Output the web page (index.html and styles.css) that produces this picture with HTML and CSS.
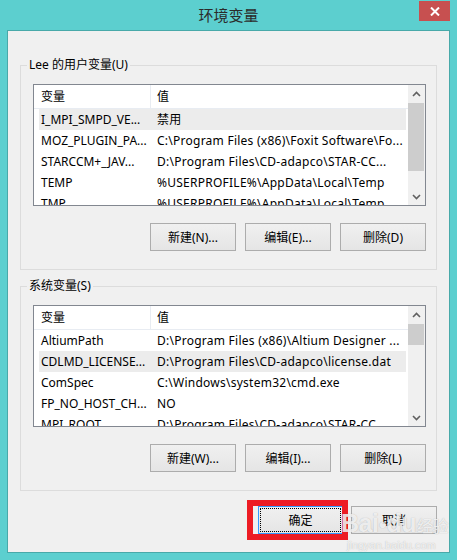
FILE: index.html
```html
<!DOCTYPE html>
<html lang="zh-CN">
<head>
  <meta charset="UTF-8" />
  <title>环境变量</title>
  <link rel="stylesheet" href="styles.css">
</head>
<body>
  <div class="window">
    <div class="titlebar">
      <span></span>
      <div class="title">环境变量</div>
      <button class="close" title="关闭">
        <svg width="10" height="9" viewBox="0 0 10 9"><path d="M1 0.5 L9 8.5 M9 0.5 L1 8.5" stroke="#fff" stroke-width="2"/></svg>
      </button>
    </div>

    <div class="client">
      <fieldset class="group">
        <legend>Lee 的用户变量(U)</legend>
        <div class="group-body">
          <div class="list">
            <div class="list-main">
              <div class="list-head">
                <div class="col1">变量</div>
                <div class="col2">值</div>
              </div>
              <div class="rows">
                <div class="row selected"><div class="col1">I_MPI_SMPD_VE...</div><div class="col2">禁用</div></div>
                <div class="row"><div class="col1">MOZ_PLUGIN_PA...</div><div class="col2">C:\Program Files (x86)\Foxit Software\Fo...</div></div>
                <div class="row"><div class="col1">STARCCM+_JAV...</div><div class="col2">D:\Program Files\CD-adapco\STAR-CC...</div></div>
                <div class="row"><div class="col1">TEMP</div><div class="col2">%USERPROFILE%\AppData\Local\Temp</div></div>
                <div class="row"><div class="col1">TMP</div><div class="col2">%USERPROFILE%\AppData\Local\Temp</div></div>
              </div>
            </div>
            <div class="scrollbar">
              <div class="sb-arrow"><svg width="9" height="6" viewBox="0 0 9 6"><path d="M1 5 L4.5 1.5 L8 5" fill="none" stroke="#606060" stroke-width="1.6"/></svg></div>
              <div class="sb-track"><div class="sb-thumb thumb-user"></div></div>
              <div class="sb-arrow"><svg width="9" height="6" viewBox="0 0 9 6"><path d="M1 1 L4.5 4.5 L8 1" fill="none" stroke="#606060" stroke-width="1.6"/></svg></div>
            </div>
          </div>
          <div class="btn-row">
            <button class="btn">新建(N)...</button>
            <button class="btn">编辑(E)...</button>
            <button class="btn">删除(D)</button>
          </div>
        </div>
      </fieldset>

      <fieldset class="group group-sys">
        <legend>系统变量(S)</legend>
        <div class="group-body">
          <div class="list">
            <div class="list-main">
              <div class="list-head">
                <div class="col1">变量</div>
                <div class="col2">值</div>
              </div>
              <div class="rows">
                <div class="row"><div class="col1">AltiumPath</div><div class="col2">D:\Program Files (x86)\Altium Designer ...</div></div>
                <div class="row selected"><div class="col1">CDLMD_LICENSE...</div><div class="col2">D:\Program Files\CD-adapco\license.dat</div></div>
                <div class="row"><div class="col1">ComSpec</div><div class="col2">C:\Windows\system32\cmd.exe</div></div>
                <div class="row"><div class="col1">FP_NO_HOST_CH...</div><div class="col2">NO</div></div>
                <div class="row"><div class="col1">MPI_ROOT</div><div class="col2">D:\Program Files\CD-adapco\STAR-CC...</div></div>
              </div>
            </div>
            <div class="scrollbar">
              <div class="sb-arrow"><svg width="9" height="6" viewBox="0 0 9 6"><path d="M1 5 L4.5 1.5 L8 5" fill="none" stroke="#606060" stroke-width="1.6"/></svg></div>
              <div class="sb-track"><div class="sb-thumb thumb-sys"></div></div>
              <div class="sb-arrow"><svg width="9" height="6" viewBox="0 0 9 6"><path d="M1 1 L4.5 4.5 L8 1" fill="none" stroke="#606060" stroke-width="1.6"/></svg></div>
            </div>
          </div>
          <div class="btn-row">
            <button class="btn">新建(W)...</button>
            <button class="btn">编辑(I)...</button>
            <button class="btn">删除(L)</button>
          </div>
        </div>
      </fieldset>

      <div class="dialog-buttons">
        <div class="ok-wrap">
          <button class="btn btn-ok">确定</button>
          <div class="mark"></div>
        </div>
        <button class="btn">取消</button>
      </div>

      <div class="watermark">
        <div class="wm-logo">Bai<span class="wm-paw">●</span>du<span class="wm-cn">经验</span></div>
        <div class="wm-url">jingyan.baidu.com</div>
      </div>
    </div>
  </div>
</body>
</html>
```

FILE: styles.css
```css
* {
  box-sizing: border-box;
}

body {
  margin: 0;
  font-family: "Noto Sans", "Noto Sans CJK SC", sans-serif;
  font-size: 12px;
  color: #000;
}

.window {
  width: 457px;
  height: 560px;
  background-color: #5ccfcf;
  padding: 0 7px 7px;
  display: flex;
  flex-direction: column;
}

.titlebar {
  height: 30px;
  flex: none;
  display: grid;
  grid-template-columns: 1fr auto 1fr;
}

.title {
  font-family: "Noto Sans CJK SC", sans-serif;
  font-size: 15px;
  line-height: 29px;
  color: #2b2b2b;
}

.close {
  justify-self: end;
  width: 31px;
  height: 20px;
  margin-top: 1px;
  padding: 0;
  border: none;
  background-color: #c75050;
  display: flex;
  align-items: center;
  justify-content: center;
}

.client {
  flex: 1;
  position: relative;
  background-color: #f0f0f0;
  border: 1px solid #48a9a9;
  padding: 26px 12px 0;
}

/* group boxes */
.group {
  margin: 0;
  padding: 0;
  min-width: 0;
  border: 1px solid #dcdcdc;
}

.group legend {
  margin-left: 6px;
  padding: 0 2px;
  line-height: 16px;
}

.group-sys {
  margin-top: 8px;
}

.group-body {
  padding: 11px 10px 18px 12px;
}

/* list view */
.list {
  height: 122px;
  border: 1px solid #828790;
  background-color: #fff;
  display: flex;
}

.list-main {
  flex: 1;
  min-width: 0;
  overflow: hidden;
}

.list-head {
  display: flex;
  height: 24px;
  line-height: 23px;
  border-bottom: 1px solid #e8ecf2;
}

.list-head .col1 {
  width: 117px;
  padding-left: 7px;
  border-right: 1px solid #e8ecf2;
}

.list-head .col2 {
  padding-left: 6px;
}

.rows {
  padding: 0 2px 0 5px;
}

.row {
  display: flex;
  height: 21px;
  line-height: 21px;
  white-space: nowrap;
}

.row.selected {
  background-color: #ececec;
}

.row .col1 {
  width: 116px;
  flex: none;
  padding-left: 2px;
  overflow: hidden;
}

.row .col2 {
  padding-left: 2px;
  overflow: hidden;
  letter-spacing: 0.25px;
}

.scrollbar {
  width: 17px;
  flex: none;
  background-color: #f0f0f0;
  display: flex;
  flex-direction: column;
}

.sb-arrow {
  height: 17px;
  display: flex;
  align-items: center;
  justify-content: center;
}

.sb-track {
  flex: 1;
  padding: 1px 1px 0 0;
}

.sb-thumb {
  background-color: #cdcdcd;
}

.thumb-user {
  height: 68px;
}

.thumb-sys {
  height: 21px;
}

/* buttons */
.btn-row {
  display: flex;
  justify-content: flex-end;
  gap: 9px;
  margin-top: 17px;
}

.btn {
  width: 86px;
  height: 28px;
  padding: 0;
  border: 1px solid #acacac;
  background: linear-gradient(#f0f0f0, #e5e5e5);
  font: inherit;
  color: #000;
}

.dialog-buttons {
  display: flex;
  justify-content: flex-end;
  gap: 8px;
  margin-top: 15px;
}

.ok-wrap {
  position: relative;
  display: flex;
}

.btn-ok {
  width: 85px;
  border-color: #3399ff;
  background: linear-gradient(#f0f0f0, #e5e5e5);
  outline: 1px dotted #000;
  outline-offset: -3px;
}

/* red annotation box around OK */
.mark {
  position: absolute;
  top: -6px;
  bottom: -6px;
  left: -11px;
  right: -5px;
  border: 6px solid #ed1c24;
}

/* baidu watermark */
.watermark {
  position: absolute;
  left: 333px;
  top: 478px;
  color: rgba(255, 255, 255, 0.8);
  text-shadow: 0 0 1px rgba(90, 90, 90, 0.45);
  font-family: "Liberation Sans", sans-serif;
  pointer-events: none;
}

.wm-logo {
  font-size: 25px;
  font-weight: bold;
  line-height: 28px;
  letter-spacing: -0.5px;
}

.wm-paw {
  font-size: 14px;
  vertical-align: 3px;
}

.wm-cn {
  font-family: "Noto Sans CJK SC", sans-serif;
  font-size: 16px;
  font-weight: normal;
  margin-left: 1px;
}

.wm-url {
  font-size: 11px;
  line-height: 13px;
  padding-left: 6px;
}
```
